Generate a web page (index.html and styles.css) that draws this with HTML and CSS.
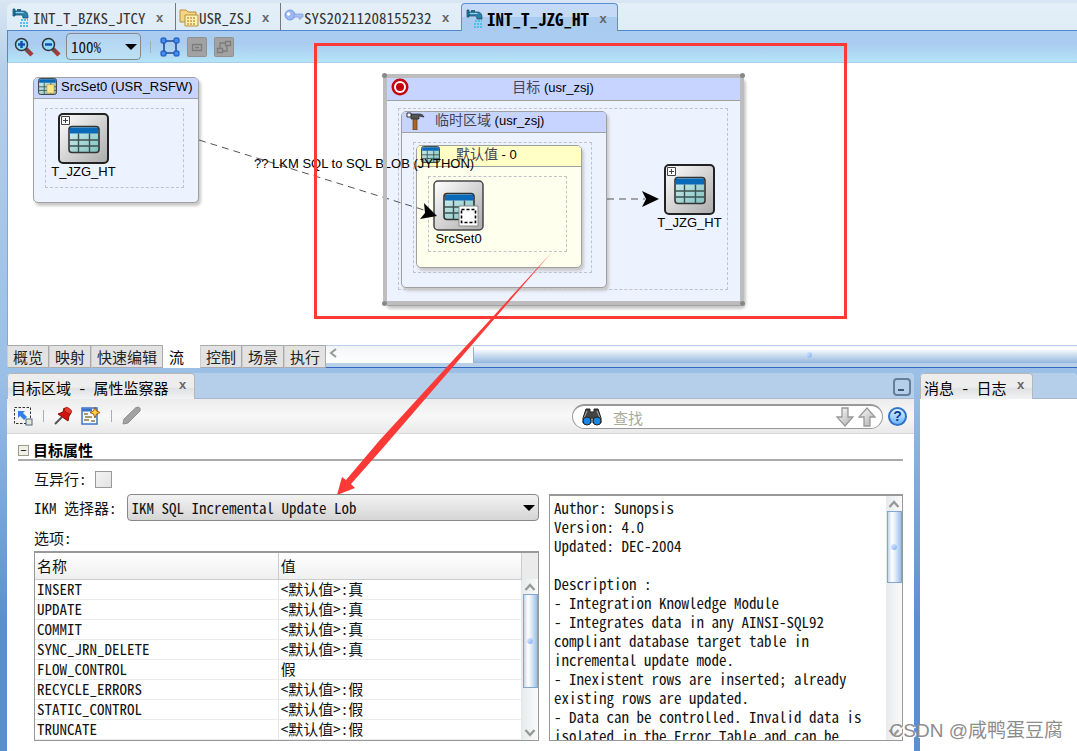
FILE: index.html
```html
<!DOCTYPE html>
<html lang="zh-CN">
<head>
<meta charset="utf-8">
<title>INT_T_JZG_HT</title>
<link rel="stylesheet" href="styles.css">
</head>
<body>
<svg class="defs" aria-hidden="true">
  <defs>
    <linearGradient id="tile" x1="0" y1="0" x2="1" y2="1"><stop offset="0" stop-color="#fff"/><stop offset="1" stop-color="#aaa"/></linearGradient>
    <linearGradient id="cell" x1="0" y1="0" x2="1" y2="1"><stop offset="0" stop-color="#d4f0f0"/><stop offset="1" stop-color="#7fbfc0"/></linearGradient>
    <linearGradient id="arrowFill" x1="0" y1="0" x2="1" y2="1"><stop offset="0" stop-color="#fff"/><stop offset="1" stop-color="#aaa"/></linearGradient>
    <symbol id="grid" viewBox="0 0 32 28">
      <rect x="1" y="1" width="30" height="26" rx="3" fill="url(#cell)" stroke="#333" stroke-width="1.6"/>
      <path d="M2 2h28v6H2z" fill="#0a6ab8"/>
      <path d="M10.500 8v19M21.500 8v19M1 14.500h30M1 20.500h30" stroke="#3c5050" stroke-width="1.400"/>
    </symbol>
    <symbol id="tap" viewBox="0 0 17 20">
      <path d="M1 1h2v7H1zM3 3h8c4 0 5 2 5 7h-5c0-2-1-3-2-3H3z" fill="#2b7fa8" stroke="#145070" stroke-width=".8"/>
      <path d="M3.500 4.500h8" stroke="#8fd4ee" stroke-width="1.200"/><path d="M5 1h4v2H5z" fill="#2b6484"/>
      <path d="M9 12h7M8 15h8M8 18h8" stroke="#58bce8" stroke-width="2" stroke-dasharray="2 1"/>
    </symbol>
    <symbol id="lens" viewBox="0 0 20 20">
      <path d="M12 12l6 6" stroke="#a83a3a" stroke-width="4.500"/><path d="M11 11l4 4" stroke="#555" stroke-width="2"/>
      <circle cx="7.500" cy="7.500" r="6" fill="#8edcfb" stroke="#333" stroke-width="1.500"/>
    </symbol>
    <symbol id="up" viewBox="0 0 12 8"><path d="M1.500 7L6 2l4.500 5" fill="none" stroke="#999" stroke-width="2.400"/></symbol>
  </defs>
</svg>

<main class="app">
  <section class="editor">
    <nav class="tabs">
      <div class="tab t1"><svg width="17" height="20"><use href="#tap"/></svg><span class="tab-name">INT_T_BZKS_JTCY</span><button class="close" aria-label="关闭">x</button></div>
      <div class="tab t2"><svg width="20" height="19" viewBox="0 0 20 19"><path d="M1 2h6l2 2h8v10H1z" fill="#f4d582" stroke="#b98f3c"/><path d="M6 7h13v11H6z" fill="#fff1b5" stroke="#b98f3c"/><path d="M8 10h9M8 13h9M8 16h9" stroke="#c79a3d" stroke-width="1.500" stroke-dasharray="2 1"/></svg><span class="tab-name">USR_ZSJ</span><button class="close" aria-label="关闭">x</button></div>
      <div class="tab t3"><svg width="20" height="19" viewBox="0 0 20 19"><circle cx="6" cy="7" r="5" fill="#9db7f2" stroke="#7b98dd"/><circle cx="4.500" cy="6" r="1.800" fill="#fff"/><path d="M10 6h9v3h-2v2h-2V9h-5z" fill="#a9c0f6" stroke="#7b98dd" stroke-width=".7"/></svg><span class="tab-name">SYS20211208155232</span><button class="close" aria-label="关闭">x</button></div>
      <div class="tab active"><svg width="17" height="20"><use href="#tap"/></svg><span class="tab-name">INT_T_JZG_HT</span><button class="close" aria-label="关闭">x</button></div>
    </nav>
    <div class="toolbar">
      <button class="tool" aria-label="放大"><svg width="20" height="20"><use href="#lens"/><path d="M4 7.500h7M7.500 4v7" stroke="#154fae" stroke-width="2.500"/></svg></button>
      <button class="tool" aria-label="缩小"><svg width="20" height="20"><use href="#lens"/><path d="M4 7.500h7" stroke="#154fae" stroke-width="2.500"/></svg></button>
      <span class="pick zoom"><select aria-label="缩放"><option>100%</option></select></span>
      <i class="rule"></i>
      <button class="tool" aria-label="适合窗口"><svg width="20" height="20" viewBox="0 0 20 20"><path d="M4 4h12v12H4z" fill="none" stroke="#234a9c" stroke-width="1.600"/><g fill="#3f8df5" stroke="#1b4cae"><rect x="1" y="1" width="5" height="5" rx="1"/><rect x="14" y="1" width="5" height="5" rx="1"/><rect x="1" y="14" width="5" height="5" rx="1"/><rect x="14" y="14" width="5" height="5" rx="1"/></g></svg></button>
      <button class="tool" aria-label="节点" disabled><svg width="20" height="20" viewBox="0 0 20 20"><rect x=".5" y=".5" width="19" height="19" rx="1" fill="#a2a2a2" stroke="#919191"/><path d="M5.500 7.500h9v6h-9zM8 10.500h4" fill="none" stroke="#7c7c7c" stroke-width="1.300"/></svg></button>
      <button class="tool" aria-label="布局" disabled><svg width="20" height="20" viewBox="0 0 20 20"><rect x=".5" y=".5" width="19" height="19" rx="1" fill="#a2a2a2" stroke="#919191"/><path d="M11.500 4.500h5v4h-5zM3.500 11.500h5v4h-5zM8 14h5V9M11 6H6v5" fill="none" stroke="#7c7c7c" stroke-width="1.300"/></svg></button>
    </div>

    <div class="canvas">
      <div class="node source"><div class="head"><svg width="19" height="17" viewBox="0 0 32 28" preserveAspectRatio="none"><use href="#grid"/><path d="M15 11h12v14H15z" fill="#ffe58c" stroke="#b99535"/></svg>SrcSet0 (USR_RSFW)</div></div>
      <div class="slot slot-source"></div>
      <div class="node target"><div class="head"><svg width="18" height="18" viewBox="0 0 18 18"><circle cx="9" cy="9" r="8.500" fill="#c8000c"/><circle cx="9" cy="9" r="6" fill="#fff"/><circle cx="9" cy="9" r="4" fill="#c8000c"/></svg><b class="mid"><span class="zh">目标</span> (usr_zsj)</b></div></div>
      <div class="slot slot-target"></div>
      <div class="node staging"><div class="head"><svg width="20" height="18" viewBox="0 0 20 18"><path d="M7 6h4v12H7z" fill="#a8672a" stroke="#5c3512" stroke-width=".7"/><path d="M5 2h8c3 0 4 1 5 3l-5-1v3H5z" fill="#555" stroke="#222" stroke-width=".7"/><path d="M1 1h4v4H1z" fill="#fff" stroke="#333"/></svg><b><span class="zh">临时区域</span> (usr_zsj)</b></div></div>
      <div class="slot slot-staging"></div>
      <div class="node default"><div class="head"><svg width="19" height="17" viewBox="0 0 32 28" preserveAspectRatio="none"><use href="#grid"/></svg><b><span class="zh">默认值</span> - 0</b></div></div>
      <div class="slot slot-default"></div>

      <figure class="store store-a"><svg width="51" height="51" viewBox="0 0 51 51"><rect x="1" y="1" width="49" height="49" rx="4" fill="url(#tile)" stroke="#222" stroke-width="2"/><path d="M3.500 3.500h8v8h-8zM7.500 5v5M5 7.500h5" fill="#fff" stroke="#444"/><use href="#grid" x="10" y="12" width="32" height="29"/></svg><figcaption>T_JZG_HT</figcaption></figure>
      <figure class="store store-b"><svg width="51" height="51" viewBox="0 0 51 51"><rect x="1" y="1" width="49" height="49" rx="4" fill="url(#tile)" stroke="#444" stroke-width="1.500"/><use href="#grid" x="10" y="12" width="32" height="29"/><path d="M26 26h19v20H26z" fill="#fff" stroke="#888"/><path d="M28.500 29.500h14v13h-14z" fill="none" stroke="#000" stroke-width="1.600" stroke-dasharray="3 2"/></svg><figcaption>SrcSet0</figcaption></figure>
      <figure class="store store-c"><svg width="51" height="51" viewBox="0 0 51 51"><rect x="1" y="1" width="49" height="49" rx="4" fill="url(#tile)" stroke="#222" stroke-width="2"/><path d="M3.500 3.500h8v8h-8zM7.500 5v5M5 7.500h5" fill="#fff" stroke="#444"/><use href="#grid" x="10" y="12" width="32" height="29"/></svg><figcaption>T_JZG_HT</figcaption></figure>

      <svg class="edges" width="760" height="250" viewBox="0 0 760 250">
        <path d="M191 77L416 147M599 136h38" fill="none" stroke="#555" stroke-dasharray="7 5"/>
        <path d="M429 153l-17 3 5-6-1-10zM651 136l-17 8 4-8-4-8z" fill="#000"/>
      </svg>
      <span class="edge-name">?? LKM SQL to SQL BLOB (JYTHON)</span>
      <div class="selection"><i></i><i></i><i></i><i></i></div>
    </div>

    <div class="views">
      <button>概览</button><button>映射</button><button>快速编辑</button><button class="on">流</button><button>控制</button><button>场景</button><button>执行</button>
      <div class="hscroll"><svg width="8" height="12" viewBox="0 0 8 12"><path d="M7 2L2 6l5 4" fill="none" stroke="#999" stroke-width="2"/></svg><div class="hthumb"><i class="dot"></i></div></div>
    </div>
  </section>

  <div class="lower">
    <section class="pane props">
      <div class="pane-tabs"><h2 class="pane-tab">目标区域 - 属性监察器<button class="close" aria-label="关闭">x</button></h2><button class="minimize" aria-label="最小化"></button></div>
      <div class="pane-tools">
        <button class="tool" aria-label="选择"><svg width="20" height="20" viewBox="0 0 20 20"><path d="M1.500 1.500h16v16h-16z" fill="none" stroke="#333" stroke-dasharray="2.500 1.500"/><path d="M5 5h7l-2 2 4 4-3 3-4-4-2 2z" fill="#2f80ee"/><rect x="13" y="13" width="6" height="6" fill="#dfe8e0" stroke="#567"/></svg></button>
        <i class="rule"></i>
        <button class="tool" aria-label="固定"><svg width="19" height="20" viewBox="0 0 19 20"><path d="M1 18l7-7" stroke="#555" stroke-width="2"/><path d="M10 2l7 5-2 3-1 5-10-7 5-2z" fill="#d3130f" stroke="#8b0906"/><ellipse cx="14" cy="4.500" rx="4" ry="2.500" transform="rotate(35 14 4.500)" fill="#ec3b2c" stroke="#8b0906" stroke-width=".6"/></svg></button>
        <button class="tool" aria-label="新建"><svg width="20" height="20" viewBox="0 0 20 20"><rect x="1" y="2" width="15" height="16" fill="#f5faff" stroke="#3b73c8" stroke-width="1.500"/><path d="M1 4h10" stroke="#3b73c8" stroke-width="3"/><path d="M3 8h4M4 11h7M3 14h5M10 15h4" stroke="#8c7c43" stroke-width="1.500"/><path d="M14 1l1.500 4L19 6.500 15.500 8 14 12l-1.500-4L9 6.500 12.500 5z" fill="#ffd43c" stroke="#a85a10"/></svg></button>
        <i class="rule"></i>
        <button class="tool" aria-label="编辑"><svg width="20" height="20" viewBox="0 0 20 20"><path d="M1 18l1-5L14 1.500q5-1.500 4 3.500L6 17z" fill="#a2a2a2" stroke="#8c8c8c"/></svg></button>
        <div class="find">
          <svg width="22" height="20" viewBox="0 0 22 20"><path d="M5 2h4v3h4V2h4l3 9v5h-8v-5h-2v5H2v-5z" fill="#444" stroke="#222"/><path d="M6 4l-3 7M16 4l3 7" stroke="#aaa"/><circle cx="6" cy="14" r="4" fill="#1787e6" stroke="#222"/><circle cx="16" cy="14" r="4" fill="#1787e6" stroke="#222"/></svg>
          <input type="text" placeholder="查找" aria-label="查找">
          <button class="tool" aria-label="下一个"><svg width="18" height="20" viewBox="0 0 18 20"><path d="M6 1h6v9h5l-8 9-8-9h5z" fill="url(#arrowFill)" stroke="#999" stroke-width="1.300"/></svg></button>
          <button class="tool" aria-label="上一个"><svg width="18" height="20" viewBox="0 0 18 20"><path d="M6 19h6v-9h5L9 1l-8 9h5z" fill="url(#arrowFill)" stroke="#999" stroke-width="1.300"/></svg></button>
        </div>
        <button class="help" aria-label="帮助">?</button>
      </div>
      <div class="form">
        <h3 class="section"><button class="fold" aria-label="折叠">−</button>目标属性</h3>
        <div class="line check"><label for="distinct">互异行:</label><input id="distinct" type="checkbox"></div>
        <div class="columns">
          <div class="left">
            <div class="line"><label for="ikm">IKM 选择器:</label><span class="pick ikm"><select id="ikm"><option>IKM SQL Incremental Update Lob</option></select></span></div>
            <p class="caption">选项:</p>
            <div class="options">
              <table>
                <thead><tr><th>名称</th><th>值</th></tr></thead>
                <tbody>
                  <tr><td>INSERT</td><td>&lt;默认值&gt;:真</td></tr>
                  <tr><td>UPDATE</td><td>&lt;默认值&gt;:真</td></tr>
                  <tr><td>COMMIT</td><td>&lt;默认值&gt;:真</td></tr>
                  <tr><td>SYNC_JRN_DELETE</td><td>&lt;默认值&gt;:真</td></tr>
                  <tr><td>FLOW_CONTROL</td><td>假</td></tr>
                  <tr><td>RECYCLE_ERRORS</td><td>&lt;默认值&gt;:假</td></tr>
                  <tr><td>STATIC_CONTROL</td><td>&lt;默认值&gt;:假</td></tr>
                  <tr><td>TRUNCATE</td><td>&lt;默认值&gt;:假</td></tr>
                </tbody>
              </table>
              <div class="vscroll with-corner"><svg width="12" height="8"><use href="#up"/></svg><div class="vthumb long"><i class="dot"></i></div><svg class="down" width="12" height="8"><use href="#up"/></svg></div>
            </div>
          </div>
          <div class="about">
            <textarea readonly aria-label="说明">Author: Sunopsis
Version: 4.0
Updated: DEC-2004

Description :
- Integration Knowledge Module
- Integrates data in any AINSI-SQL92
compliant database target table in
incremental update mode.
- Inexistent rows are inserted; already
existing rows are updated.
- Data can be controlled. Invalid data is
isolated in the Error Table and can be</textarea>
            <div class="vscroll"><svg width="12" height="8"><use href="#up"/></svg><div class="vthumb"><i class="dot"></i></div><svg class="down" width="12" height="8"><use href="#up"/></svg></div>
          </div>
        </div>
      </div>
    </section>
    <section class="pane log">
      <div class="pane-tabs"><h2 class="pane-tab">消息 - 日志<button class="close" aria-label="关闭">x</button></h2></div>
      <div class="log-body"></div>
    </section>
  </div>
</main>
<svg class="marks" width="860" height="500" viewBox="0 0 860 500" aria-hidden="true">
  <path d="M315.500 44.500h530v273h-530z" fill="none" stroke="#fb3a38" stroke-width="3"/>
  <path d="M552 252L379 441 346 480 342 477 337 495 355 488 351 484 382 449z" fill="#fb3a38"/>
</svg>
<div class="credit">CSDN @咸鸭蛋豆腐</div>
</body>
</html>
```

FILE: styles.css
```css
* { box-sizing: border-box; }
body {
  --mono: "Noto Sans Mono CJK SC", "Liberation Mono", "Noto Sans CJK SC", monospace;
  margin: 0;
  position: relative;
  height: 100vh;
  overflow: hidden;
  background: linear-gradient(#d9e6f3, #b5cfea 70px, #9abfe6 380px, #5b90cf 620px);
  color: #111;
  font: 15px/20px var(--mono);
}
button, input, select, textarea { font: inherit; color: inherit; }
button { padding: 0; border: 0; background: none; }
h2, h3, p, figure { margin: 0; font-size: 15px; font-weight: 400; }
svg { display: block; flex: none; }
.defs { position: absolute; width: 0; height: 0; }
.app { display: flex; flex-direction: column; height: 100%; padding: 3px 0 0 7px; }
.editor { flex: none; }

/* document tabs */
.tabs { display: flex; height: 28px; background: linear-gradient(#e4eff8, #dfecf6); border-bottom: 1px solid #4f87d3; border-radius: 6px 0 0; }
.tab { display: flex; align-items: center; color: #333; padding-top: 2px; }
.tab-name { white-space: nowrap; }
.t1 { padding-left: 5px; width: 168px; }
.t1 svg { margin-right: 4px; }
.t2, .t3 { border-left: 1px solid #777; background-clip: padding-box; padding-left: 3px; }
.t2 { width: 105px; }
.t3 { width: 181px; }
.tab.active { width: 157px; height: 28px; padding-left: 4px; border: 1px solid #5c8fda; border-bottom: 0; border-radius: 4px 4px 0 0; background: linear-gradient(#c5daf4 50%, #a9cbf0 50%); color: #000; font-size: 17px; font-weight: 700; }
.tab.active svg { margin-right: 4px; }
.close { width: 12px; margin-left: 8px; color: #666; font: 700 13px/14px "Liberation Sans", sans-serif; }

/* editor toolbar */
.toolbar { display: flex; align-items: center; gap: 7px; height: 32px; padding-left: 6px; border-left: 1px solid #4f87d3; border-bottom: 1px solid #a7cbe8; background: linear-gradient(#a9ccf0 40%, #b5e4f6); }
.rule { width: 1px; height: 12px; background: #a5adb5; margin: 0 2px; }
.pick { position: relative; display: block; }
.pick::after { content: ""; position: absolute; right: 4px; top: 50%; margin-top: -3px; border: 6px solid transparent; border-top-color: #000; border-bottom: 0; pointer-events: none; }
.pick select { appearance: none; display: block; width: 100%; height: 27px; padding: 0 4px; border: 1px solid #888; border-radius: 4px; background: linear-gradient(#f3f3f3, #d5d5d5); outline: 0; }
.zoom { width: 75px; margin-left: -2px; }
.zoom select { background: linear-gradient(#b4d2f1, #bce2f5); }

/* flow diagram */
.canvas { position: relative; height: 282px; background: #fff; border-left: 1px solid #7daade; font: 13px/16px "Liberation Sans", "Noto Sans CJK SC", sans-serif; color: #000; overflow: hidden; }
.node { position: absolute; border: 1px solid #a0a0a0; border-radius: 5px; background: #edf2ff; box-shadow: 2px 3px 3px #c8c8c8; overflow: hidden; }
.head { display: flex; align-items: center; height: 21px; padding: 0 0 3px 4px; gap: 4px; background: #c6d4ff; border-bottom: 1px solid #a0a0a0; white-space: nowrap; }
.head b { font-weight: 400; }
.zh { font-size: 14px; color: #445; }
.slot { position: absolute; border: 1px dashed #bfc3cc; }
.source { left: 25px; top: 14px; width: 166px; height: 126px; }
.slot-source { left: 37px; top: 45px; width: 139px; height: 80px; }
.target { left: 376px; top: 13px; width: 360px; height: 230px; }
.target .head { height: 24px; padding-left: 6px; }
.mid { flex: 1; text-align: center; padding-right: 50px; }
.slot-target { left: 390px; top: 45px; width: 330px; height: 182px; }
.staging { left: 393px; top: 48px; width: 206px; height: 177px; }
.staging b { padding-left: 5px; }
.slot-staging { left: 405px; top: 79px; width: 179px; height: 131px; }
.default { left: 408px; top: 82px; width: 166px; height: 123px; background: #ffffed; }
.default .head { background: #ffffc6; }
.default b { padding-left: 12px; }
.slot-default { left: 420px; top: 113px; width: 139px; height: 76px; }
.store { position: absolute; width: 75px; display: flex; flex-direction: column; align-items: center; font-size: 13px; }
.store-a { left: 38px; top: 50px; }
.store-b { left: 413px; top: 117px; }
.store-c { left: 644px; top: 101px; }
.edges { position: absolute; left: 0; top: 0; }
.edge-name { position: absolute; left: 246px; top: 93px; white-space: nowrap; }
.selection { position: absolute; left: 375px; top: 11px; width: 361px; height: 231px; border: 4px solid #bdbdbd; border-radius: 3px; }
.selection i { position: absolute; width: 5px; height: 5px; background: #888; border-radius: 50%; }
.selection i:nth-child(1) { left: -5px; top: -5px; }
.selection i:nth-child(2) { right: -5px; top: -5px; }
.selection i:nth-child(3) { left: -5px; bottom: -5px; }
.selection i:nth-child(4) { right: -5px; bottom: -5px; }

/* view switcher */
.views { display: flex; height: 23px; background: #b9d0ea; border-bottom: 1px solid #3569c0; }
.views button { height: 23px; padding: 0 5px; border: 1px solid #aaa; border-left-color: #ccc; background: #e2e2e2; color: #222; white-space: nowrap; line-height: 21px; }
.views .on { padding: 0 15px 0 5px; border-color: #fff; background: #fff; color: #000; }
.hscroll { flex: 1; display: flex; height: 18px; padding: 1px 0 0 3px; border-top: 1px solid #b9d0ea; background: linear-gradient(#f1f4f7, #fff); }
.hthumb { flex: 1; margin-left: 136px; border-left: 1px solid #8fb2da; background: linear-gradient(#fff 10%, #d9e6f3 40%, #94b7de); display: flex; align-items: center; justify-content: center; }
.dot { width: 6px; height: 6px; border-radius: 50%; background: linear-gradient(135deg, #e4f0ff, #7faaf5); }
.hthumb .dot { margin-left: 66px; }

/* lower panes */
.lower { flex: 1; min-height: 0; display: grid; grid-template-columns: 907fr 157fr; gap: 6px; padding-top: 5px; }
.pane { display: flex; flex-direction: column; min-height: 0; min-width: 0; background: #fff; border-radius: 5px 5px 0 0; overflow: hidden; }
.pane-tabs { flex: none; display: flex; height: 26px; justify-content: space-between; background: #b5cfea; border-bottom: 1px solid #a5b8cc; }
.pane-tab { display: flex; align-items: center; height: 26px; padding: 2px 5px 0 3px; border: 1px solid #b7b7b7; border-bottom: 0; border-radius: 4px 4px 0 0; background: linear-gradient(#ededed 50%, #e0e2e4 60%, #f2f2f2); white-space: nowrap; color: #000; }
.pane-tab .close { align-self: flex-start; margin-top: 2px; }
.minimize { width: 18px; height: 18px; margin: 5px 3px 0 0; border: 2px solid #647f9c; border-radius: 4px; position: relative; }
.minimize::after { content: ""; position: absolute; left: 3px; bottom: 3px; width: 6px; height: 2px; background: #43566c; }
.pane-tools { flex: none; display: flex; align-items: center; gap: 8px; height: 35px; padding: 0 7px 0 6px; background: linear-gradient(#ececec, #f8f8f8 50%, #e9e9e9); border-bottom: 1px solid #d8d8d8; }
.find { display: flex; align-items: center; width: 311px; height: 25px; margin-left: auto; padding: 0 6px 0 8px; gap: 4px; border: 1px solid #999; border-top-width: 2px; border-radius: 13px; background: #fff; }
.find input { flex: 1; min-width: 0; height: 20px; padding: 2px 0 0 6px; border: 0; outline: 0; background: none; }
.find input::placeholder { color: #aaaa98; opacity: 1; }
.help { width: 19px; height: 19px; margin-left: -3px; border: 2px solid #3273c8; border-radius: 50%; background: linear-gradient(#e0f4ff, #69b4f8); color: #0b3c94; font: 700 14px/14px "Liberation Sans", sans-serif; }
.form { flex: 1; min-height: 0; display: flex; flex-direction: column; padding: 7px 11px 10px; }
.section { display: flex; align-items: center; gap: 4px; height: 20px; border-bottom: 2px solid #aaa; font-weight: 700; color: #000; }
.fold { width: 11px; height: 11px; border: 1px solid #9a9a8a; background: #f0f0e8; font: 11px/9px "Liberation Sans", sans-serif; }
.line { display: flex; align-items: center; white-space: nowrap; }
.check { height: 33px; padding-left: 16px; gap: 8px; padding-top: 3px; }
.check input { appearance: none; width: 17px; height: 17px; margin: 0; border: 1px solid #999; background: linear-gradient(135deg, #f4f4f4, #e2e2e2); }
.columns { flex: 1; min-height: 0; display: grid; grid-template-columns: 505fr 354fr; gap: 10px; padding-left: 16px; }
.left { display: flex; flex-direction: column; min-height: 0; min-width: 0; }
.left .line { gap: 10px; }
.ikm { flex: 1; }
.caption { height: 30px; padding-top: 7px; }
.options, .about { display: flex; min-height: 0; border: 1px solid #999; border-top-width: 2px; overflow: hidden; }
.options { flex: 1; }
table { flex: 1; width: 100%; min-width: 0; table-layout: fixed; border-collapse: collapse; align-self: flex-start; }
th { width: 50%; height: 26px; padding: 0 2px; text-align: left; font-weight: 400; background: linear-gradient(#fff, #efefef); border-right: 1px solid #ccc; border-bottom: 1px solid #ccc; }
td { height: 20px; padding: 0 2px; line-height: 18px; border-right: 1px solid #e6e6e6; border-bottom: 1px solid #ebebeb; white-space: nowrap; }
.vscroll { flex: none; width: 16px; display: flex; flex-direction: column; align-items: center; gap: 3px; padding: 4px 0 3px; background: linear-gradient(90deg, #e8eaec, #fafafa); }
.with-corner { border-top: 26px solid #ebebeb; }
.vthumb { width: 15px; flex: 0 1 72px; display: flex; align-items: center; justify-content: center; border: 1px solid #7ea6d0; background: linear-gradient(90deg, #bfd5ec, #fff 30%, #dce8f5 60%, #9dbfe0); }
.long { flex-basis: 94px; }
.down { margin-top: auto; transform: rotate(180deg); }
.about textarea { flex: 1; min-width: 0; padding: 2px 4px 0; border: 0; outline: 0; resize: none; overflow: hidden; background: #fff; line-height: 19px; }
.log-body { flex: 1; background: #fff; }

.marks { position: absolute; left: 0; top: 0; pointer-events: none; }
.credit { position: absolute; right: 14px; bottom: 8px; font: 19px/24px "Liberation Sans", "Noto Sans CJK SC", sans-serif; color: #8c8c8c; text-shadow: 1px 1px 0 #fff; white-space: nowrap; }
```
